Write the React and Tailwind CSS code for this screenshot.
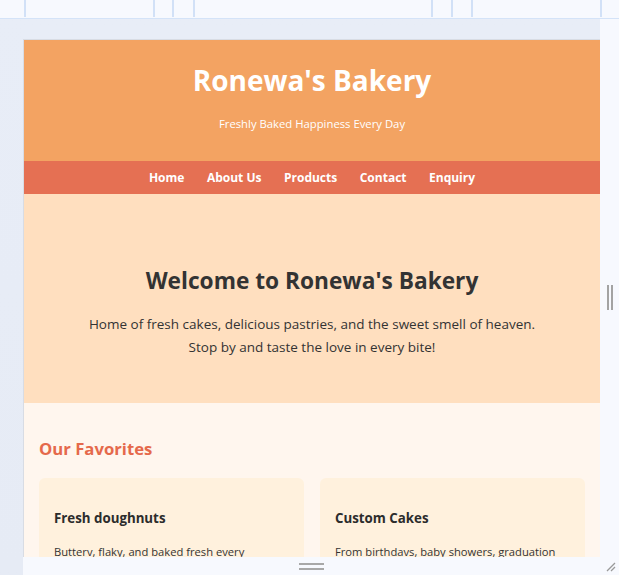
const font = { fontFamily: '"Open Sans", "Noto Sans", sans-serif' }

function Tick() {
  return <div className="w-[2px] h-[17px] bg-[#d2e1f7]" />
}

function Card({ title, text }) {
  return (
    <div className="rounded-md bg-[#fff1dd] px-[15px] pt-[30px] pb-6">
      <h3 className="text-[13.3px] font-bold leading-[20px] text-[#2c2c2c]">{title}</h3>
      <p className="mt-[14px] text-[11.2px] leading-[20px] text-[#333]">{text}</p>
    </div>
  )
}

export default function App() {
  return (
    <div className="w-[619px] h-[575px] overflow-hidden flex flex-col bg-[#f7f9fe]" style={font}>
      {/* top ruler strip */}
      <div className="h-[19px] shrink-0 flex border-b border-[#d4e3f8] bg-[#f7f9fe]">
        <div className="w-[24px]" />
        <Tick />
        <div className="w-[127px]" />
        <Tick />
        <div className="w-[17px]" />
        <Tick />
        <div className="w-[19px]" />
        <Tick />
        <div className="w-[236px]" />
        <Tick />
        <div className="w-[18px]" />
        <Tick />
        <div className="w-[18px]" />
        <Tick />
        <div className="w-[127px]" />
        <Tick />
      </div>

      <div className="flex-1 flex min-h-0">
        {/* left gutter */}
        <div className="w-[23px] shrink-0 bg-gradient-to-b from-[#e8edf7] to-[#e6ebf5]" />

        <div className="flex-1 flex flex-col min-w-0">
          <div className="flex-1 flex min-h-0">
            <div className="w-[577px] flex flex-col bg-gradient-to-b from-[#e8edf7] to-[#e9eef8]">
              <div className="h-[20px] shrink-0" />
              {/* preview frame */}
              <div className="flex-1 overflow-hidden border-t border-l border-[#d8dce4] bg-[#fff6ee]">
                <header className="bg-[#f3a362] pt-[21px] pb-[29px] text-center text-white">
                  <h1 className="text-[28px] font-bold leading-[38px]">Ronewa's Bakery</h1>
                  <p className="mt-[17px] text-[11.3px] leading-[16px]">Freshly Baked Happiness Every Day</p>
                </header>
                <nav className="h-[33px] bg-[#e57053] flex items-center justify-center gap-[22.5px] text-[12px] font-bold text-white">
                  <span>Home</span>
                  <span>About Us</span>
                  <span>Products</span>
                  <span>Contact</span>
                  <span>Enquiry</span>
                </nav>
                <section className="h-[209px] bg-[#ffdfbf] pt-[70px] text-center text-[#333]">
                  <h2 className="text-[22.7px] font-bold leading-[34px]">Welcome to Ronewa's Bakery</h2>
                  <p className="mt-[15px] text-[13.5px] leading-[23px]">
                    Home of fresh cakes, delicious pastries, and the sweet smell of heaven.
                    <br />
                    Stop by and taste the love in every bite!
                  </p>
                </section>
                <section className="px-[15px] pt-[33px]">
                  <h2 className="text-[16.7px] font-bold leading-[26px] text-[#e5694b]">Our Favorites</h2>
                  <div className="mt-[16px] grid grid-cols-2 gap-[16px]">
                    <Card title="Fresh doughnuts" text="Butterv, flaky, and baked fresh every morning." />
                    <Card title="Custom Cakes" text="From birthdavs, baby showers, graduation and weddings." />
                  </div>
                </section>
              </div>
            </div>
            {/* right scroll strip */}
            <div className="flex-1 bg-[#f7f9fe] flex justify-center items-start pt-[266px]">
              <div className="flex gap-[2px]">
                <div className="w-[2px] h-[25px] bg-[#a3a3a3]" />
                <div className="w-[2px] h-[25px] bg-[#a3a3a3]" />
              </div>
            </div>
          </div>

          {/* bottom bar */}
          <div className="h-[18px] shrink-0 bg-[#f7f9fe] flex items-center relative">
            <div className="w-[276px]" />
            <div className="flex flex-col gap-[3px]">
              <div className="w-[25px] h-[2px] bg-[#a8a8a8]" />
              <div className="w-[25px] h-[2px] bg-[#a8a8a8]" />
            </div>
            <svg className="absolute right-[3px] bottom-[3px]" width="12" height="12" viewBox="0 0 12 12">
              <path d="M11 3 L3 11 M11 7 L7 11" stroke="#9a9a9a" strokeWidth="1.3" />
            </svg>
          </div>
        </div>
      </div>
    </div>
  )
}
